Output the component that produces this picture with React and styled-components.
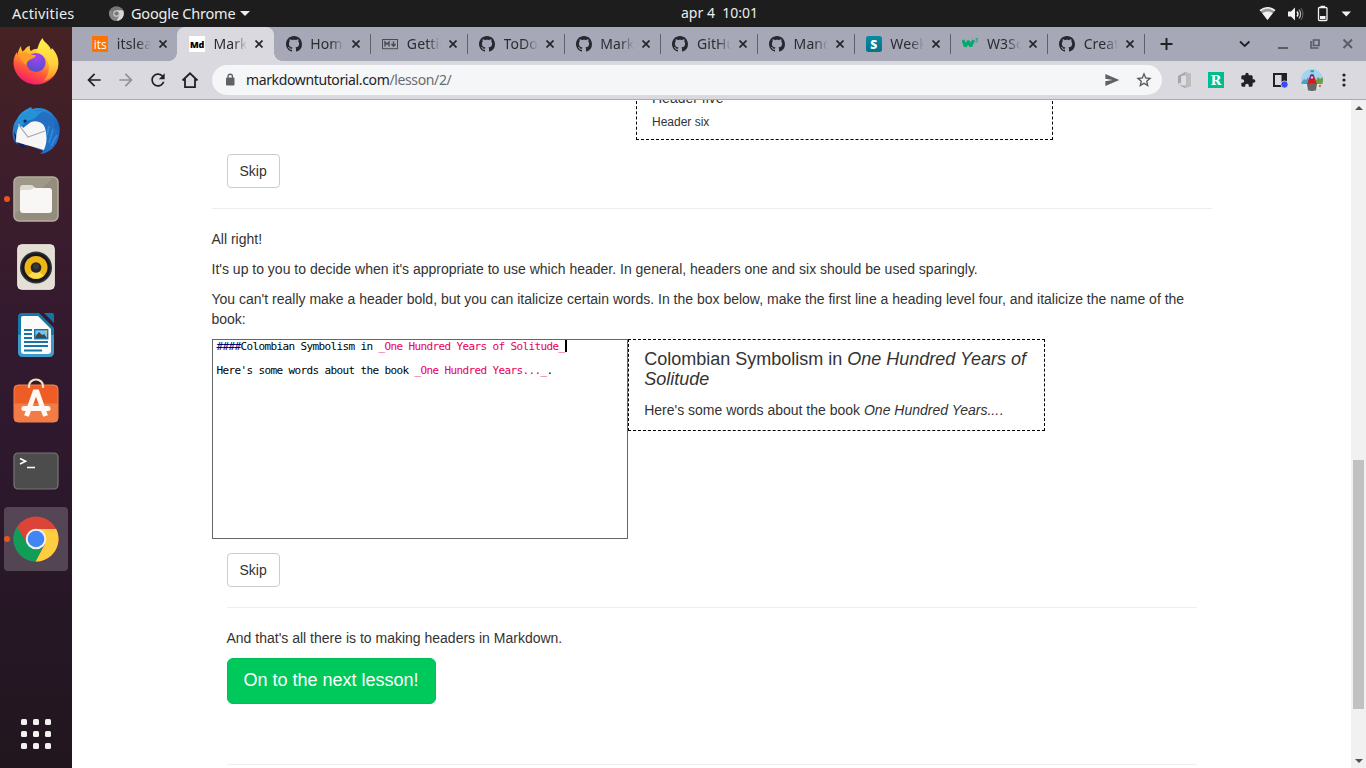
import React from "react";
import styled, { createGlobalStyle, css } from "styled-components";

const GlobalStyle = createGlobalStyle`
  *, *::before, *::after { box-sizing: border-box; }
  body { margin: 0; overflow: hidden; background: #fff; }
  svg { display: block; flex: none; }
`;

const uiFont = css`font-family: "Noto Sans", "Open Sans", sans-serif;`;

const Desktop = styled.div`
  width: 1366px;
  height: 768px;
  display: flex;
  flex-direction: column;
  overflow: hidden;
`;

/* ---------- system bar ---------- */
const TopBar = styled.header`
  ${uiFont}
  height: 27px;
  flex: none;
  background: #1d1d1d;
  color: #ededed;
  display: grid;
  grid-template-columns: 681px 1fr auto;
  align-items: center;
  font-size: 14px;
  line-height: 24px;
  white-space: pre;
`;
const BarLeft = styled.div`
  display: flex;
  align-items: center;
  padding-left: 12px;
`;
const BarText = styled.span`
  font-size: ${(p) => p.$size || 14}px;
  letter-spacing: ${(p) => p.$track || 0}px;
  width: ${(p) => (p.$w ? p.$w + "px" : "auto")};
  margin-left: ${(p) => p.$gap || 0}px;
  padding-bottom: 2px;
`;
const BarRight = styled.div`
  display: flex;
  align-items: center;
  padding-right: 15px;
`;
const Caret = styled.i`
  width: 0;
  height: 0;
  border: 5px solid transparent;
  border-top-color: #ededed;
  border-bottom: 0;
`;

/* ---------- dock ---------- */
const Main = styled.div`
  flex: 1;
  display: flex;
  min-height: 0;
`;
const Dock = styled.nav`
  width: 72px;
  flex: none;
  display: flex;
  flex-direction: column;
  align-items: center;
  gap: 4px;
  padding: 4px 0 2px;
  background: linear-gradient(#472223 0%, #3c1d2c 22%, #32192f 45%, #2c182c 62%, #261725 80%, #21161e 100%);
`;
const DockItem = styled.div`
  width: 64px;
  height: 64px;
  flex: none;
  border-radius: 4px;
  display: flex;
  align-items: center;
  justify-content: center;
  padding-bottom: ${(p) => p.$lift || 0}px;
  position: relative;
  background: ${(p) => (p.$active ? "rgba(255,255,255,.2)" : "none")};
  ${(p) =>
    p.$running &&
    css`
      &::before {
        content: "";
        position: absolute;
        left: 0;
        top: 29px;
        width: 6px;
        height: 6px;
        border-radius: 50%;
        background: #e95420;
      }
    `}
`;
const AppGrid = styled.div`
  margin-top: auto;
  height: 64px;
  display: grid;
  grid-template-columns: repeat(3, 6px);
  grid-auto-rows: 6px;
  gap: 6px;
  align-content: center;
  i { background: #f2f1ef; border-radius: 1.5px; }
`;

/* ---------- browser ---------- */
const Browser = styled.div`
  flex: 1;
  min-width: 0;
  display: flex;
  flex-direction: column;
`;
const TabStrip = styled.div`
  ${uiFont}
  height: 34px;
  flex: none;
  background: #a7a8b7;
  display: flex;
  padding-left: 8.8px;
`;
const Tab = styled.div`
  width: 96.7px;
  flex: none;
  height: 34px;
  display: flex;
  align-items: center;
  padding-left: 11.5px;
  position: relative;
  font-size: 14px;
  color: #2b2c31;
  ${(p) =>
    p.$divider &&
    css`
      &::after {
        content: "";
        position: absolute;
        right: -0.5px;
        top: 7px;
        width: 1px;
        height: 20px;
        background: #5f6068;
      }
    `}
  ${(p) =>
    p.$active &&
    css`
      background: #dad9df;
      border-radius: 8px 8px 0 0;
      &::before,
      &::after {
        content: "";
        position: absolute;
        bottom: 0;
        width: 8px;
        height: 8px;
      }
      &::before {
        left: -8px;
        background: radial-gradient(circle at 0 0, transparent 7.5px, #dad9df 8px);
      }
      &::after {
        right: -8px;
        background: radial-gradient(circle at 100% 0, transparent 7.5px, #dad9df 8px);
      }
    `}
`;
const TabTitle = styled.span`
  width: 34px;
  margin-left: 8.5px;
  margin-right: 8px;
  overflow: hidden;
  white-space: nowrap;
  line-height: 20px;
  letter-spacing: 0.1px;
  mask-image: linear-gradient(90deg, #000 60%, transparent 100%);
`;
const Badge = styled.span`
  width: 16px;
  height: 16px;
  flex: none;
  display: flex;
  align-items: center;
  justify-content: center;
  border-radius: ${(p) => p.$radius || 0}px;
  background: ${(p) => p.$bg};
  color: ${(p) => p.$fg};
  font: ${(p) => p.$font};
  letter-spacing: ${(p) => p.$track || 0}px;
`;
const StripButtons = styled.div`
  display: flex;
  align-items: center;
  padding-left: 12.5px;
`;
const Toolbar = styled.div`
  ${uiFont}
  height: 39px;
  flex: none;
  background: #dad9df;
  border-bottom: 1px solid #acabb0;
  display: flex;
  align-items: center;
  padding-left: 6px;
`;
const Slot = styled.div`
  width: 32px;
  height: 38px;
  flex: none;
  display: flex;
  align-items: center;
  justify-content: center;
`;
const Omnibox = styled.div`
  width: 950px;
  height: 30px;
  flex: none;
  margin: 0 6px;
  border-radius: 15px;
  background: #f5f6f8;
  display: flex;
  align-items: center;
  padding: 0 2px;
`;
const Url = styled.span`
  flex: 1;
  font-size: 14px;
  line-height: 20px;
  letter-spacing: -0.37px;
  color: #232428;
  span { color: #6a6b70; }
`;
const Round = styled.div`
  width: 22px;
  height: 22px;
  border-radius: 50%;
  overflow: hidden;
`;

/* ---------- page ---------- */
const Viewport = styled.div`
  flex: 1;
  min-height: 0;
  display: flex;
`;
const Page = styled.main`
  flex: 1;
  overflow: hidden;
  padding-left: 139.5px;
  background: #fff;
  color: #333;
  font: 14px/20px "Liberation Sans", Arial, sans-serif;
`;
const Container = styled.div`
  width: 1000px;
`;
const Inset = styled.div`
  padding: 0 15px;
`;
const Paragraph = styled.p`
  margin: 0 0 10px;
`;
const Rule = styled.hr`
  border: 0;
  border-top: 1px solid #eee;
  height: 0;
  margin: ${(p) => p.$top || 20}px 0 20px;
`;
const Preview = styled.div`
  width: 416.67px;
  flex: none;
  border: 1px dashed #000;
  padding: 0 15px;
`;
const Heading = styled.div`
  font-size: ${(p) => p.$size}px;
  line-height: 1.1;
  margin: 10px 0;
`;
const LessonHeading = styled(Heading)`
  line-height: 20px;
  margin: 9px 0 11px;
`;
const HeadersPreview = styled(Preview)`
  margin: -40px 0 14px 424.5px;
  padding-top: 20px;
  ${Heading}:last-child { margin-bottom: 9px; }
`;
const Button = styled.button`
  display: block;
  height: 34px;
  padding: 0 12px;
  border: 1px solid #ccc;
  border-radius: 4px;
  background: #fff;
  color: #333;
  font: inherit;
`;
const NextButton = styled(Button)`
  width: 209px;
  height: 46px;
  padding: 0 0 2px;
  border-color: #00bd56;
  border-radius: 6px;
  background: #00c95c;
  color: #fff;
  font-size: 18px;
`;
const Exercise = styled.div`
  display: flex;
  align-items: flex-start;
  margin-bottom: 14px;
`;
const Editor = styled.div`
  width: 416.67px;
  height: 200px;
  flex: none;
  border: 1px solid #666;
  padding: 1px 4px;
  font: 11px/12px "DejaVu Sans Mono", monospace;
  letter-spacing: -0.622px;
  color: #000;
  white-space: pre;
`;
const Line = styled.div`
  height: 12px;
  display: flex;
  b { font-weight: 400; color: #000060; }
  em { font-style: normal; color: #e8005a; }
`;
const Cursor = styled.i`
  width: 2px;
  height: 12px;
  margin: -1px 0 0 0.5px;
  background: #000;
`;
const Scrollbar = styled.div`
  width: 15px;
  flex: none;
  background: #f1f1f1;
  display: flex;
  flex-direction: column;
  align-items: center;
  justify-content: space-between;
  padding: 6px 0 5px;
`;
const Thumb = styled.div`
  width: 11px;
  height: 249px;
  margin: 350px 0 auto;
  background: #c1c1c1;
`;
const Arrow = styled.i`
  width: 0;
  height: 0;
  border: 4px solid transparent;
  ${(p) =>
    p.$up ? "border-top: 0; border-bottom-color: #505050;" : "border-bottom: 0; border-top-color: #505050;"}
`;

const Icon = ({ d, size = 20, color = "#202124", box = 24 }) => (
  <svg width={size} height={size} viewBox={`0 0 ${box} ${box}`} fill={color}>
    <path d={d} fillRule="evenodd" />
  </svg>
);

const paths = {
  github:
    "M8 0C3.58 0 0 3.58 0 8c0 3.54 2.29 6.53 5.47 7.59.4.07.55-.17.55-.38 0-.19-.01-.82-.01-1.49-2.01.37-2.53-.49-2.69-.94-.09-.23-.48-.94-.82-1.13-.28-.15-.68-.52-.01-.53.63-.01 1.08.58 1.23.82.72 1.21 1.87.87 2.33.66.07-.52.28-.87.51-1.07-1.78-.2-3.64-.89-3.64-3.95 0-.87.31-1.59.82-2.15-.08-.2-.36-1.02.08-2.12 0 0 .67-.21 2.2.82.64-.18 1.32-.27 2-.27.68 0 1.36.09 2 .27 1.53-1.04 2.2-.82 2.2-.82.44 1.1.16 1.92.08 2.12.51.56.82 1.27.82 2.15 0 3.07-1.87 3.75-3.65 3.95.29.25.54.73.54 1.48 0 1.07-.01 1.93-.01 2.2 0 .21.15.46.55.38A8.013 8.013 0 0016 8c0-4.42-3.58-8-8-8z",
  back: "M20 11H7.83l5.59-5.59L12 4l-8 8 8 8 1.41-1.41L7.83 13H20v-2z",
  forward: "M12 4l-1.41 1.41L16.17 11H4v2h12.17l-5.58 5.59L12 20l8-8z",
  reload:
    "M17.65 6.35C16.2 4.9 14.21 4 12 4c-4.42 0-7.99 3.58-7.99 8s3.57 8 7.99 8c3.73 0 6.84-2.55 7.73-6h-2.08c-.82 2.33-3.04 4-5.65 4-3.31 0-6-2.69-6-6s2.69-6 6-6c1.66 0 3.14.69 4.22 1.78L13 11h7V4l-2.35 2.35z",
  send: "M2.01 21L23 12 2.01 3 2 10l11 2-11 2z",
  star: "M22 9.24l-7.19-.62L12 2 9.19 8.63 2 9.24l5.46 4.73L5.82 21 12 17.27 18.18 21l-1.63-7.03L22 9.24zM12 15.4l-3.76 2.27 1-4.28-3.32-2.88 4.38-.38L12 6.1l1.71 4.04 4.38.38-3.32 2.88 1 4.28L12 15.4z",
  puzzle:
    "M20.5 11H19V7c0-1.1-.9-2-2-2h-4V3.5C13 2.12 11.88 1 10.5 1S8 2.12 8 3.5V5H4c-1.1 0-1.99.9-1.99 2v3.8H3.5c1.49 0 2.7 1.21 2.7 2.7s-1.21 2.7-2.7 2.7H2V20c0 1.1.9 2 2 2h3.8v-1.5c0-1.49 1.21-2.7 2.7-2.7 1.49 0 2.7 1.21 2.7 2.7V22H17c1.1 0 2-.9 2-2v-4h1.5c1.38 0 2.5-1.12 2.5-2.5S21.88 11 20.5 11z",
};

const CloseMark = () => (
  <svg width="8" height="8" viewBox="0 0 8 8" stroke="#24252a" strokeWidth="1.7">
    <path d="M.5.5l7 7M7.5.5l-7 7" />
  </svg>
);

const MarkdownIcon = () => (
  <svg width="16" height="16" viewBox="0 0 16 16" fill="none" stroke="#4b4c50">
    <rect x=".5" y="3.5" width="15" height="9.2" />
    <path d="M3 10.6V6l2 2.2L7 6v4.6M11.5 5.4v4.4M9.4 8l2.1 2.3L13.6 8" strokeWidth="1.4" />
  </svg>
);

const W3Icon = () => (
  <svg width="16" height="16" viewBox="0 0 16 16" fill="none" stroke="#04aa6d">
    <path d="M1 4l2.300 6.500L6.500 5l2.200 5.500L11.600 4" strokeWidth="3" strokeLinejoin="bevel" />
    <path d="M13.300 2.600h2.200l-1 1.400c1.400 0 1.500 2.100-.1 2.100-.6 0-.9-.2-1.200-.5" strokeWidth=".9" />
  </svg>
);

const favicons = {
  its: <Badge $bg="#ff7300" $fg="#fff" $font='12px "Open Sans", sans-serif'>its</Badge>,
  md: <Badge $bg="#fff" $fg="#000" $font='900 9px "Noto Sans", sans-serif' $track={-0.2}>Md</Badge>,
  gh: <Icon d={paths.github} size={16} box={16} color="#24292f" />,
  markdown: <MarkdownIcon />,
  s: (
    <Badge $bg="linear-gradient(#078aa4,#067287)" $fg="#fff" $radius={2.5} $font='900 12px "Noto Sans", sans-serif'>S</Badge>
  ),
  w3: <W3Icon />,
};

const tabs = [
  ["its", "itslearning"],
  ["md", "Markdown"],
  ["gh", "Home"],
  ["markdown", "Getting"],
  ["gh", "ToDo"],
  ["gh", "Markdown"],
  ["gh", "GitHub"],
  ["gh", "Mandag"],
  ["s", "Weekly"],
  ["w3", "W3Schools"],
  ["gh", "Create"],
];

const Firefox = () => (
  <svg width="48" height="48" viewBox="0 0 48 48">
    <defs>
      <linearGradient id="ffBody" x1=".8" y1="0" x2=".3" y2="1">
        <stop offset="0" stopColor="#fff44f" /><stop offset=".35" stopColor="#ffb52e" />
        <stop offset=".65" stopColor="#ff5a3a" /><stop offset="1" stopColor="#f5136f" />
      </linearGradient>
      <radialGradient id="ffGlobe" cx=".55" cy=".2" r=".9">
        <stop offset="0" stopColor="#a443ee" /><stop offset="1" stopColor="#4d50c9" />
      </radialGradient>
      <linearGradient id="ffTail" x1=".5" y1="0" x2=".5" y2="1">
        <stop offset="0" stopColor="#fff24c" /><stop offset=".6" stopColor="#ffd13a" /><stop offset="1" stopColor="#ff8b2b" />
      </linearGradient>
    </defs>
    <path d="M9 9c0 2 .5 4 1.5 5.500L12.500 13c1-1.700 2.500-3.500 5.500-4-.5 2-.3 4 1 5 3-2.600 8-2.800 11-1 8 4 15 8 16 17-2 10-11 17.500-22 17.500S1.500 38.500 1.500 25.500c0-5 1.800-8 3.500-10.500L5.500 18C6 14 7.500 11 9 9z" fill="url(#ffBody)" />
    <path d="M23 17c3-3 2-9 7.500-16 .8 4 5 5 7.500 9.500l1 2.500.8-2c4 4 7 9 6.600 16-.4 9-7 15-15 17 7-7 7-18 2-23-3-3-6-4-10.400-4z" fill="url(#ffTail)" />
    <circle cx="24" cy="25.500" r="9.600" fill="url(#ffGlobe)" />
    <path d="M7 18c3-3 6-3.500 9-1.500 3 1.500 5 1.200 8 1.800-1 3-4 3.200-6 4.500-2.500 1.500-3.500 2.500-3.500 5-3-1-5.500-5-7.500-9.800z" fill="#ff9c2a" />
  </svg>
);

const Thunderbird = () => (
  <svg width="50" height="50" viewBox="0 0 50 50">
    <defs>
      <linearGradient id="tb" x1=".3" y1="0" x2=".8" y2="1">
        <stop offset="0" stopColor="#2f9be6" /><stop offset=".55" stopColor="#1b66bd" /><stop offset="1" stopColor="#2a6fd0" />
      </linearGradient>
    </defs>
    <path d="M20 1l1 2c9-3 18 1 22 7 5 5 7 12 5 20-2 10-9 17-19 18l3-3-14-6C10 40 4 40 2 31c-1-6 0-13 4-18C10 5 15 4 20 1z" fill="url(#tb)" />
    <path d="M3 26c1 9 4 14 11 17l-1-6-7-6z" fill="#171b56" />
    <path d="M10 16l20-3c5 8 8 20 3 31L5 36c0-8 1-14 5-20z" fill="#f6f6f7" />
    <path d="M7 18l10 13 17-6" fill="none" stroke="#a7a9b4" strokeWidth="1.200" />
    <path d="M10 18c-1-7 5-12 13-14 11-1 22 7 21 19l3 2-2 3 2 2-4 5 1 2-5 4v3l-7 4 2-6c5-10 2-16 0-21-3-5-8-7-14-5l-8 6z" fill="#236fc1" />
    <path d="M9 20c-1-8 5-14 13-16l10 1c-5 3-6 7-12 9l-5 1-5 6z" fill="#2492d5" />
    <path d="M42 23l-4 14M38 20l-2 9M46 29l-6 11" stroke="#2f8ee0" strokeWidth="1.600" />
    <circle cx="14" cy="15" r="1.600" fill="#132c54" />
  </svg>
);

const Files = () => (
  <svg width="46" height="46" viewBox="0 0 46 46">
    <rect x="1" y="1" width="44" height="44" rx="5" fill="#948c7c" stroke="#b7b0a0" strokeWidth="1.500" />
    <path d="M2 38V6q0-4 4-4h34z" fill="#a09888" />
    <path d="M7 12q0-3 3-3h8q2 0 3 2l2 2v4H7z" fill="#dedbd3" />
    <rect x="7" y="12" width="32" height="25" rx="3" fill="#f8f7f5" />
    <path d="M7 15q1-1 3-1h6q3 0 5-2l2-1H7z" fill="#dedbd3" />
  </svg>
);

const Rhythmbox = () => (
  <svg width="38" height="46" viewBox="0 0 38 46">
    <rect x=".7" y=".7" width="36.600" height="44.600" rx="4" fill="#e3dfd5" stroke="#f1eee6" />
    <circle cx="19" cy="23.500" r="16" fill="#34343b" />
    <circle cx="19" cy="23.500" r="14.500" fill="#18181e" />
    <circle cx="19" cy="23.500" r="11.500" fill="#efb716" />
    <path d="M11 31.500l8-6 8 6q-8 6-16 0z" fill="#ffdd50" />
    <circle cx="19" cy="23.500" r="5.300" fill="#25252c" />
    <circle cx="19" cy="22.500" r="3" fill="#37373d" />
  </svg>
);

const Writer = () => (
  <svg width="38" height="46" viewBox="0 0 38 46">
    <path d="M5 1h17l15 15v24q0 5-5 5H6q-5 0-5-5V5q0-4 4-4z" fill="#1578a9" />
    <path d="M1 23h36v17q0 5-5 5H6q-5 0-5-5z" fill="#3d9bc9" />
    <path d="M6 4h15l13 13v22q0 3-3 3H7q-3 0-3-3V6q0-2 2-2z" fill="#fbfbfb" />
    <path d="M27 1h8q2 0 2 2v8z" fill="#1675a7" />
    <path d="M7 18h8M7 22h8M7 26h8M7 30h24M7 34h24M7 38.500h18" stroke="#1774a5" strokeWidth="1.800" />
    <rect x="17.700" y="17.700" width="13" height="9" fill="#79c4ee" stroke="#1774a5" strokeWidth="1.400" />
    <path d="M18.500 26v-2l3.500-4 3 3 2-1 3 4z" fill="#464646" />
    <path d="M27.500 18.500h2.700v2.700z" fill="#efbd20" />
  </svg>
);

const Software = () => (
  <svg width="46" height="46" viewBox="0 0 46 46">
    <rect x="1" y="8" width="44" height="37" rx="4" fill="#ef5d27" stroke="#f3834f" />
    <path d="M1 26.500h44V41q0 4-4 4H5q-4 0-4-4z" fill="#f37b46" />
    <path d="M16 11V9a7 6.500 0 0 1 14 0v2" fill="none" stroke="#f1dfb8" strokeWidth="2.200" />
    <path d="M13.500 39L22 15h2l8.500 24" fill="none" stroke="#fff8f3" strokeWidth="5" />
    <path d="M11 31.500h24" stroke="#fff8f3" strokeWidth="5" strokeLinecap="round" />
  </svg>
);

const Terminal = () => (
  <svg width="46" height="38" viewBox="0 0 46 38">
    <rect x="1" y="1" width="44" height="36" rx="4" fill="#4b4c4b" stroke="#777" strokeWidth="1.200" />
    <path d="M7 6.500l5.500 2.800L7 12.100M14 15.500h8" fill="none" stroke="#fff" strokeWidth="1.700" />
  </svg>
);

const Chrome = ({ size = 46, mono }) => (
  <svg width={size} height={size} viewBox="0 0 46 46">
    <circle cx="23" cy="23" r="22.500" fill={mono ? "#777" : "#db4437"} />
    <path d="M23 13h20.200A22.500 22.500 0 0 1 22.500 45.500L32 28z" fill={mono ? "#d6d6d6" : "#ffcd40"} />
    <path d="M14.300 28L4 10.700A22.500 22.500 0 0 0 22.500 45.500L31 29z" fill={mono ? "#858585" : "#0f9d58"} />
    <circle cx="23" cy="23" r="10.300" fill={mono ? "#c8c8c8" : "#f1f1f1"} />
    <circle cx="23" cy="23" r={mono ? 6.5 : 8.3} fill={mono ? "#767676" : "#4285f4"} />
  </svg>
);

const dockApps = [
  { id: "firefox", art: <Firefox />, lift: 4 },
  { id: "thunderbird", art: <Thunderbird /> },
  { id: "files", art: <Files />, running: true },
  { id: "rhythmbox", art: <Rhythmbox /> },
  { id: "writer", art: <Writer /> },
  { id: "software", art: <Software />, lift: 6 },
  { id: "terminal", art: <Terminal /> },
  { id: "chrome", art: <Chrome />, running: true, active: true },
];

const SystemBar = () => (
  <TopBar>
    <BarLeft>
      <BarText $w={97} $size={14.5} $track={0.2}>Activities</BarText>
      <Chrome size={15} mono />
      <BarText $w={109} $gap={7} $size={14.5} $track={-0.2}>Google Chrome</BarText>
      <Caret />
    </BarLeft>
    <BarText>apr 4  10:01</BarText>
    <BarRight>
      <svg width="92" height="18" viewBox="0 0 92 18" fill="none" stroke="#f2f2f2">
        <path d="M1 5.500Q8.500-.5 16 5.500L8.500 15z" fill="#9b9b9b" stroke="none" />
        <path d="M1 5.700Q8.500-.3 16 5.700" strokeWidth="1.600" />
        <path d="M3.300 8.200Q8.500 4.700 13.700 8.200L8.500 15z" fill="#f2f2f2" stroke="none" />
        <path d="M29 6.500h3l4-4v13l-4-4h-3z" fill="#f2f2f2" stroke="none" />
        <path d="M38 6.500q2 2.500 0 5" strokeWidth="1.400" />
        <path d="M40 4.500q3.200 4.500 0 9" stroke="#bbb" strokeWidth="1.200" />
        <path d="M42 3q4 6 0 12" stroke="#666" />
        <rect x="59.500" y="2.500" width="8.500" height="13" rx="1" strokeWidth="1.300" />
        <path d="M61.500 1.500h4.500" strokeWidth="1.500" />
        <path d="M61 11h5.500v3H61z" fill="#f2f2f2" stroke="none" />
        <path d="M82.500 6.500h9.500l-4.700 5z" fill="#f2f2f2" stroke="none" />
      </svg>
    </BarRight>
  </TopBar>
);

const Avatar = () => (
  <Round>
    <svg width="22" height="22" viewBox="0 0 22 22">
      <path d="M0 0h22v22H0z" fill="#a4d3f0" />
      <path d="M0 14l3-4 2 1 2-3 2 8H0z" fill="#4da0be" />
      <path d="M14 13l3-5 2 2 3-2v8h-8z" fill="#6b9f42" />
      <path d="M1 15h20v7H1z" fill="#d9e6ea" />
      <path d="M6 16l2-7q3-5 6 0l2 7z" fill="#d71920" />
      <path d="M8.500 9q0-4 2.500-4t2.500 4l-1 2h-3z" fill="#7b2884" />
      <circle cx="11" cy="8.500" r="1.300" fill="#f1b193" />
      <path d="M6 14.500h10l-1 7.500H7z" fill="#696665" />
      <path d="M9.500 2.200h3.500" stroke="#00bd84" strokeWidth="2" />
      <circle cx="19" cy="17" r="1.300" fill="#ed642e" />
    </svg>
  </Round>
);

const Tabs = () => (
  <TabStrip>
    {tabs.map(([icon, title], i) => (
      <Tab key={i} $active={i === 1} $divider={i > 1}>
        {favicons[icon]}
        <TabTitle>{title}</TabTitle>
        <CloseMark />
      </Tab>
    ))}
    <StripButtons>
      <svg width="200" height="34" viewBox="0 0 200 34" fill="none" stroke="#202124" strokeWidth="2">
        <path d="M9.500 11v12M3.500 17h12" />
        <path d="M83 14.500l4.700 4.500 4.700-4.500" strokeWidth="1.800" />
        <g stroke="#5b5c64">
          <path d="M121 21h10" />
          <path d="M156.500 13h5.500v5.500h-5.500zM154 14v7h7.500" strokeWidth="1.700" />
          <path d="M186.500 12.500l8.500 8.500M195 12.500l-8.500 8.500" />
        </g>
      </svg>
    </StripButtons>
  </TabStrip>
);

const NavBar = () => (
  <Toolbar>
    <Slot><Icon d={paths.back} /></Slot>
    <Slot><Icon d={paths.forward} color="#909095" /></Slot>
    <Slot><Icon d={paths.reload} /></Slot>
    <Slot>
      <svg width="18" height="18" viewBox="0 0 18 18" fill="none" stroke="#202124" strokeWidth="1.800">
        <path d="M1.500 9.500L9 2.300l7.500 7.200M4 8v8.200h10V8" />
      </svg>
    </Slot>
    <Omnibox>
      <Slot>
        <svg width="10" height="14" viewBox="0 0 10 14" fill="#5f6368">
          <rect x="1" y="4.500" width="8.500" height="8" rx="1" />
          <path d="M3 5V3.500a2.200 2.200 0 0 1 4.500 0V5" fill="none" stroke="#5f6368" strokeWidth="1.300" />
        </svg>
      </Slot>
      <Url>markdowntutorial.com<span>/lesson/2/</span></Url>
      <Slot><Icon d={paths.send} size={16} color="#606166" /></Slot>
      <Slot>
        <svg width="18" height="18" viewBox="0 0 24 24" fill="#55565b" stroke="#55565b" strokeWidth=".2">
          <path d={paths.star} fillRule="evenodd" />
        </svg>
      </Slot>
    </Omnibox>
    <Slot>
      <svg width="14" height="16" viewBox="0 0 14 16">
        <path d="M8 0l6 2v12l-6 2-6-3 6 .7V3L4 4.200v6.300L1 12V4z" fill="#a6a6a8" />
        <path d="M8 0l6 2v12l-6 2z" fill="#bcbcbd" /><path d="M5 4h4v8.500H5z" fill="#dedee2" />
      </svg>
    </Slot>
    <Slot><Badge $bg="#00bd8c" $fg="#fff" $font='bold 13px "DejaVu Serif", serif'>R</Badge></Slot>
    <Slot><Icon d={paths.puzzle} size={16} /></Slot>
    <Slot>
      <svg width="16" height="16" viewBox="0 0 16 16">
        <path d="M1 1h14v14H1z" fill="#202124" /><path d="M3 3h6.500v10H3z" fill="#dad9df" />
        <circle cx="12.500" cy="12.500" r="3.600" fill="#3a4bf2" stroke="#dad9df" strokeWidth=".8" />
      </svg>
    </Slot>
    <Slot><Avatar /></Slot>
    <Slot>
      <svg width="4" height="14" viewBox="0 0 4 14" fill="#202124">
        <circle cx="2" cy="2" r="1.600" /><circle cx="2" cy="7" r="1.600" /><circle cx="2" cy="12" r="1.600" />
      </svg>
    </Slot>
  </Toolbar>
);

export default function App() {
  return (
    <Desktop>
      <GlobalStyle />
      <SystemBar />
      <Main>
        <Dock>
          {dockApps.map((a) => (
            <DockItem key={a.id} $active={a.active} $running={a.running} $lift={a.lift}>{a.art}</DockItem>
          ))}
          <AppGrid>
            {Array.from({ length: 9 }, (_, i) => <i key={i} />)}
          </AppGrid>
        </Dock>
        <Browser>
          <Tabs />
          <NavBar />
          <Viewport>
            <Page>
              <Container>
                <HeadersPreview>
                  <Heading $size={14}>Header five</Heading>
                  <Heading $size={12}>Header six</Heading>
                </HeadersPreview>
                <Inset><Button>Skip</Button></Inset>
                <Rule />
                <Paragraph>All right!</Paragraph>
                <Paragraph>
                  It's up to you to decide when it's appropriate to use which header. In general, headers one and six should be used sparingly.
                </Paragraph>
                <Paragraph>
                  You can't really make a header bold, but you can italicize certain words. In the box below, make the first line a heading level four, and italicize the name of the book:
                </Paragraph>
                <Exercise>
                  <Editor>
                    <Line><b>####</b>Colombian Symbolism in <em>_One Hundred Years of Solitude_</em><Cursor /></Line>
                    <Line />
                    <Line>Here's some words about the book <em>_One Hundred Years..._</em>.</Line>
                  </Editor>
                  <Preview>
                    <LessonHeading $size={18}>Colombian Symbolism in <i>One Hundred Years of Solitude</i></LessonHeading>
                    <Paragraph>Here's some words about the book <i>One Hundred Years...</i>.</Paragraph>
                  </Preview>
                </Exercise>
                <Inset>
                  <Button>Skip</Button>
                  <Rule />
                  <Paragraph>And that's all there is to making headers in Markdown.</Paragraph>
                  <NextButton>On to the next lesson!</NextButton>
                  <Rule $top={60} />
                </Inset>
              </Container>
            </Page>
            <Scrollbar>
              <Arrow $up />
              <Thumb />
              <Arrow />
            </Scrollbar>
          </Viewport>
        </Browser>
      </Main>
    </Desktop>
  );
}
